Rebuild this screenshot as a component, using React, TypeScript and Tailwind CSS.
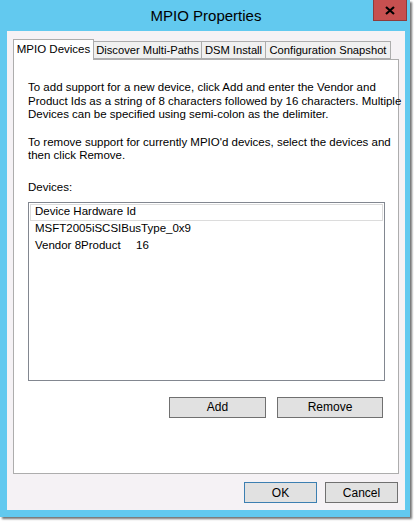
const tabs = [
  { label: "Discover Multi-Paths", w: "w-[108px]" },
  { label: "DSM Install", w: "w-[64px]" },
  { label: "Configuration Snapshot", w: "w-[125px]" },
];

const devices = [
  { id: "MSFT2005iSCSIBusType_0x9", extra: "" },
  { id: "Vendor 8Product", extra: "16" },
];

const Button = ({ label, className }: { label: string; className: string }) => (
  <button className={"h-[21px] bg-[#e1e1e1] border text-[12px] text-black leading-none " + className}>
    {label}
  </button>
);

const App = () => {
  return (
    <div className="w-[414px] h-[522px] bg-white font-['Liberation_Sans',sans-serif] text-black">
      <div className="w-[410px] h-[517px] bg-[#62c9ef] flex flex-col shadow-[2px_2px_2px_rgba(0,0,0,0.55)]">
        {/* title bar */}
        <div className="relative h-[31px] flex items-center justify-center">
          <span className="text-[15px] pl-[2px] pt-[1px]">MPIO Properties</span>
          <div className="absolute right-[3px] top-0 w-[34px] h-[21px] bg-[#c75050] border border-[#8f3b3b] border-t-0 flex items-center justify-center">
            <svg width="10" height="9" viewBox="0 0 10 9">
              <path d="M1 1 L9 8 M9 1 L1 8" stroke="black" strokeWidth="2.2" />
            </svg>
          </div>
        </div>

        {/* client area */}
        <div className="ml-[7px] w-[398px] h-[479px] bg-[#f5f2f5] flex flex-col px-[6px] pt-[7px]">
          <div className="flex items-end h-[21px] relative z-10">
            <div className="w-[81px] h-[21px] bg-white border border-[#adadad] border-b-0 text-[11.5px] flex items-center justify-center mb-[-1px] whitespace-nowrap">
              MPIO Devices
            </div>
            {tabs.map((t) => (
              <div
                key={t.label}
                className={"h-[18px] bg-[#f0f0f0] border border-[#adadad] border-l-0 text-[11.2px] flex items-center justify-center whitespace-nowrap pt-[1px] " + t.w}
              >
                {t.label}
              </div>
            ))}
          </div>

          {/* tab panel */}
          <div className="w-[386px] h-[415px] bg-white border border-[#adadad] flex flex-col px-[14px] pt-[21px] text-[11.5px]">
            <p className="leading-[13.5px] whitespace-nowrap">
              To add support for a new device, click Add and enter the Vendor and
              <br />
              Product Ids as a string of 8 characters followed by 16 characters. Multiple
              <br />
              Devices can be specified using semi-colon as the delimiter.
            </p>
            <p className="leading-[13.5px] mt-[14px] whitespace-nowrap">
              To remove support for currently MPIO'd devices, select the devices and
              <br />
              then click Remove.
            </p>
            <p className="mt-[17px] leading-[14px]">Devices:</p>

            <div className="mt-[8px] w-[357px] h-[179px] border border-[#828790] p-[1px] text-[11.5px]">
              <div className="h-[17px] border border-[#dcdcdc] flex items-center px-[4px]">
                Device Hardware Id
              </div>
              {devices.map((d) => (
                <div key={d.id} className="h-[17px] flex items-center px-[5px]">
                  <span className="w-[101px]">{d.id}</span>
                  {d.extra && <span>{d.extra}</span>}
                </div>
              ))}
            </div>

            <div className="flex justify-end gap-[11px] mt-[16px] pr-[1px]">
              <Button label="Add" className="w-[97px] border-[#707070]" />
              <Button label="Remove" className="w-[106px] border-[#707070]" />
            </div>
          </div>

          <div className="flex justify-end gap-[8px] mt-[8px] pr-[1px]">
            <Button label="OK" className="w-[73px] border-[#3c7fb1]" />
            <Button label="Cancel" className="w-[73px] border-[#707070]" />
          </div>
        </div>
      </div>
    </div>
  );
};

export default App;
